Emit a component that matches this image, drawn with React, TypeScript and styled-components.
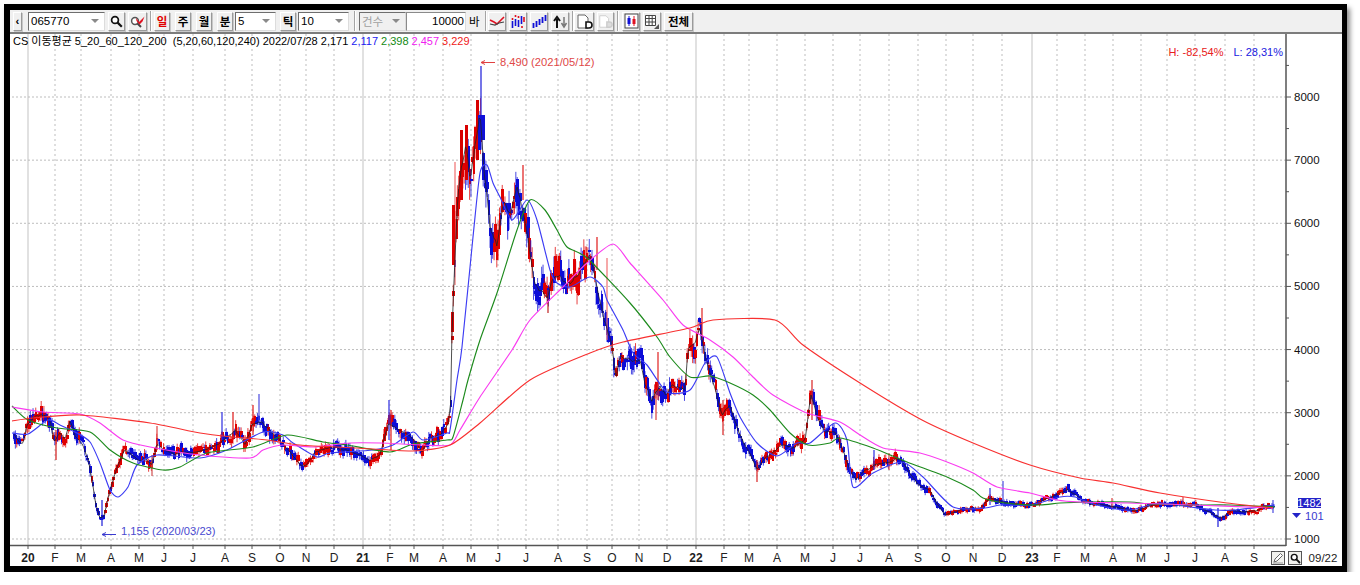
import React from "react";
import styled, { createGlobalStyle } from "styled-components";

const FONT = `"Liberation Sans", "Noto Sans CJK KR", sans-serif`;

const GlobalStyle = createGlobalStyle`
  html, body {
    margin: 0;
    background: #fff;
    font-family: ${FONT};
    overflow: hidden;
  }
`;

const Frame = styled.div`
  width: 1332px;
  height: 556px;
  margin: 4px 0 0 4px;
  border: 6px solid #000;
  border-right-width: 5px;
  box-shadow: 3px 4px 5px rgba(0, 0, 0, 0.45);
  background: #fff;
  display: flex;
  flex-direction: column;
`;

const Toolbar = styled.div`
  height: 22px;
  flex: none;
  display: flex;
  align-items: center;
  gap: 3px;
  padding-left: 3px;
  background: #f0f0f0;
  border-bottom: 2px solid #7c7c7c;
  box-sizing: content-box;
  font-size: 12px;
  color: #000;
`;

const ToolButton = styled.div<{ $w: number; $color?: string; $ml?: number }>`
  width: ${(p) => p.$w}px;
  height: 19px;
  flex: none;
  margin-left: ${(p) => p.$ml ?? 0}px;
  box-sizing: border-box;
  display: flex;
  align-items: center;
  justify-content: center;
  background: #f0f0f0;
  border: 1px solid;
  border-color: #fff #9a9a9a #9a9a9a #fff;
  box-shadow: 1px 1px 0 #c8c8c8;
  color: ${(p) => p.$color ?? "#000"};
  font-weight: 700;
  font-size: 11.5px;
`;

const Separator = styled.div<{ $ml?: number }>`
  width: 1px;
  height: 20px;
  flex: none;
  margin-left: ${(p) => p.$ml ?? 0}px;
  background: #a4a4a4;
  border-right: 1px solid #fff;
`;

const Combo = styled.div<{ $w: number; $disabled?: boolean; $ml?: number }>`
  width: ${(p) => p.$w}px;
  height: 19px;
  flex: none;
  margin-left: ${(p) => p.$ml ?? 0}px;
  box-sizing: border-box;
  display: flex;
  align-items: center;
  justify-content: space-between;
  padding: 0 5px 0 2px;
  background: ${(p) => (p.$disabled ? "#f0f0f0" : "#fff")};
  border: 1px solid;
  border-color: #6e6e6e #dcdcdc #dcdcdc #6e6e6e;
  color: ${(p) => (p.$disabled ? "#a0a0a0" : "#000")};
  font-size: 11.5px;
`;

const Arrow = styled.span`
  width: 0;
  height: 0;
  border-left: 4px solid transparent;
  border-right: 4px solid transparent;
  border-top: 4px solid #8a8a8a;
`;

const NumberInput = styled.div`
  width: 60px;
  height: 19px;
  flex: none;
  margin-left: -3px;
  box-sizing: border-box;
  text-align: right;
  line-height: 17px;
  padding-right: 1px;
  background: #fff;
  border: 1px solid;
  border-color: #8a8a8a #dcdcdc #dcdcdc #8a8a8a;
  font-size: 11.5px;
`;

const Unit = styled.span`
  width: 13px;
  flex: none;
  font-size: 11.5px;
`;

const ChartBody = styled.div`
  position: relative;
  flex: 1;
  min-height: 0;
`;

const ChartSvg = styled.svg`
  display: block;
  width: 100%;
  height: 100%;
  font-family: ${FONT};
`;

const Legend = styled.div`
  position: absolute;
  left: 3px;
  top: 0;
  display: flex;
  gap: 3px;
  font-size: 11px;
  line-height: 15px;
  white-space: pre;
`;

const LegendValue = styled.span<{ $color: string }>`
  color: ${(p) => p.$color};
`;

const RangeNote = styled.div`
  position: absolute;
  right: 59px;
  top: 11px;
  display: flex;
  gap: 10px;
  font-size: 11px;
  line-height: 14px;
`;

const CornerTools = styled.div`
  position: absolute;
  right: 1px;
  bottom: 1px;
  display: flex;
  align-items: center;
  gap: 3px;
`;

const CornerButton = styled.div`
  width: 14px;
  height: 14px;
  box-sizing: border-box;
  display: flex;
  align-items: center;
  justify-content: center;
  background: #f2f2ee;
  border: 1px solid #555;
`;

const DateLabel = styled.span`
  width: 36px;
  text-align: center;
  font-size: 11.5px;
  color: #222;
`;

const AxisText = styled.text<{ $bold?: boolean }>`
  font-size: 12px;
  font-weight: ${(p) => (p.$bold ? 700 : 400)};
  fill: #222;
  text-anchor: middle;
`;

const PriceText = styled.text`
  font-size: 11.5px;
  fill: #111;
`;

const NoteText = styled.text<{ $color: string }>`
  font-size: 11.2px;
  fill: ${(p) => p.$color};
`;

const CandleBody = styled.rect`
  shape-rendering: crispEdges;
`;

const AvgLine = styled.path<{ $color: string }>`
  fill: none;
  stroke: ${(p) => p.$color};
  stroke-width: 1.15;
`;

type Pt = [number, number];

// close path, read off the picture in page pixels
const PRICE: Pt[] = [
  [13, 432], [20, 443], [23, 445], [27, 425], [35, 416], [45, 415], [50, 420], [54, 443], [60, 432], [65, 438],
  [70, 420], [75, 436], [82, 445], [88, 458], [92, 480], [96, 505], [100, 518], [104, 516], [110, 490], [118, 465],
  [125, 450], [132, 455], [140, 462], [145, 458], [152, 465], [157, 445], [165, 450], [175, 455], [183, 452], [195, 453],
  [205, 450], [215, 445], [222, 442], [228, 435], [235, 430], [245, 445], [252, 425], [262, 422], [270, 430], [280, 440],
  [290, 452], [300, 465], [306, 466], [315, 452], [330, 447], [345, 450], [360, 455], [370, 460], [380, 455], [388, 425],
  [395, 428], [405, 432], [415, 440], [422, 452], [430, 438], [440, 435], [448, 425], [451, 400], [452, 330], [455, 260],
  [458, 190], [462, 165], [466, 140], [470, 180], [476, 140], [480, 110], [484, 170], [490, 225], [497, 245], [504, 200],
  [510, 215], [517, 185], [523, 210], [528, 240], [534, 280], [540, 290], [547, 300], [552, 280], [560, 278], [570, 285],
  [580, 270], [590, 255], [597, 285], [604, 320], [612, 345], [616, 380], [620, 355], [630, 360], [640, 362], [645, 385],
  [652, 400], [660, 385], [666, 395], [672, 385], [685, 390], [688, 350], [695, 340], [700, 330], [706, 360], [715, 390],
  [722, 415], [730, 405], [738, 430], [748, 450], [757, 470], [765, 458], [775, 450], [785, 445], [795, 448], [805, 440],
  [811, 395], [818, 420], [825, 432], [835, 432], [843, 450], [850, 470], [856, 480], [865, 470], [875, 465], [890, 462],
  [900, 458], [908, 470], [918, 485], [930, 490], [938, 505], [945, 515], [955, 512], [965, 508], [980, 508], [990, 498],
  [1005, 502], [1020, 505], [1035, 505], [1050, 497], [1068, 490], [1080, 498], [1090, 505], [1105, 505], [1120, 508], [1135, 511],
  [1150, 506], [1165, 503], [1180, 505], [1195, 505], [1205, 510], [1215, 515], [1222, 518], [1232, 510], [1245, 512], [1258, 510],
  [1268, 505], [1274, 508],
];

const MA20: Pt[] = [
  [12, 433], [28, 434], [48, 420], [60, 425], [77, 433], [90, 442], [100, 463], [110, 490], [118, 497], [128, 487],
  [137, 465], [157, 455], [200, 458], [227, 450], [263, 432], [283, 435], [293, 443], [317, 457], [330, 453], [373, 450],
  [393, 445], [413, 432], [423, 440], [447, 433], [450, 430], [457, 380], [462, 347], [473, 237], [480, 173], [487, 165],
  [493, 183], [500, 197], [512, 220], [527, 200], [537, 220], [550, 270], [557, 283], [570, 287], [590, 277], [603, 287],
  [607, 300], [623, 330], [633, 353], [647, 365], [667, 392], [690, 390], [705, 363], [717, 357], [730, 393], [740, 417],
  [757, 443], [777, 456], [797, 443], [810, 443], [835, 423], [847, 440], [853, 487], [873, 473], [902, 462], [923, 477],
  [953, 507], [985, 508], [1000, 505], [1030, 505], [1060, 497], [1075, 497], [1090, 503], [1110, 508], [1130, 510], [1160, 503],
  [1190, 507], [1215, 510], [1235, 510], [1275, 505],
];

const MA60: Pt[] = [
  [12, 406], [28, 420], [57, 428], [90, 432], [110, 450], [133, 463], [163, 470], [180, 467], [207, 453], [253, 447],
  [287, 435], [323, 442], [347, 445], [390, 452], [413, 444], [447, 440], [453, 437], [463, 400], [468, 380], [480, 340],
  [497, 293], [517, 230], [530, 200], [545, 210], [557, 230], [567, 247], [587, 258], [630, 303], [657, 337], [670, 357],
  [690, 377], [710, 376], [730, 383], [753, 395], [770, 410], [790, 433], [808, 445], [830, 443], [840, 438], [873, 448],
  [907, 462], [947, 477], [973, 490], [983, 498], [1005, 503], [1040, 505], [1060, 503], [1090, 502], [1130, 502], [1150, 504],
  [1190, 505], [1230, 505], [1275, 507],
];

const MA120: Pt[] = [
  [12, 407], [43, 412], [80, 414], [100, 423], [123, 440], [150, 447], [200, 455], [250, 458], [263, 450], [283, 445],
  [313, 447], [350, 443], [380, 443], [423, 445], [450, 445], [460, 430], [480, 397], [512, 350], [530, 320], [563, 287],
  [587, 263], [613, 244], [630, 263], [663, 300], [683, 325], [710, 340], [733, 357], [753, 377], [773, 395], [807, 413],
  [840, 422], [860, 435], [883, 448], [920, 453], [947, 462], [973, 473], [997, 487], [1030, 493], [1057, 500], [1080, 502],
  [1127, 503], [1193, 505], [1273, 508],
];

const MA240: Pt[] = [
  [12, 421], [33, 418], [80, 415], [150, 423], [200, 433], [233, 437], [267, 440], [300, 445], [357, 448], [413, 451],
  [450, 445], [480, 423], [530, 380], [590, 353], [623, 342], [690, 328], [713, 320], [775, 320], [803, 345], [860, 383],
  [922, 420], [973, 443], [1030, 465], [1080, 478], [1113, 483], [1160, 493], [1227, 503], [1273, 508],
];

// wicks that stand out from the noise: x, top, bottom, colour
const WICKS: [number, number, number, string][] = [
  [481, 66, 130, "#1a1ad8"], [259, 394, 425, "#4a4ae0"], [222, 412, 440, "#2a2ae0"], [233, 412, 440, "#e01818"],
  [253, 405, 435, "#e01818"], [157, 426, 450, "#e04040"], [56, 430, 460, "#d01818"], [152, 455, 476, "#d05050"],
  [389, 400, 440, "#2a2ae0"], [391, 410, 450, "#e01818"], [702, 308, 340, "#e02020"], [658, 352, 400, "#e02020"],
  [656, 390, 420, "#d84040"], [723, 400, 435, "#d82020"], [757, 460, 482, "#d82020"], [812, 380, 420, "#d82020"],
  [455, 162, 285, "#f07070"], [523, 165, 200, "#e01818"], [607, 258, 340, "#f07070"], [597, 237, 270, "#e01818"],
  [548, 290, 313, "#c02020"], [874, 450, 470, "#2a2ae0"], [889, 453, 470, "#e04040"], [990, 488, 505, "#2a2ae0"],
  [1003, 481, 505, "#4a4ae0"], [1112, 498, 508, "#e04040"], [1218, 508, 527, "#1a1ad8"], [1273, 500, 513, "#4a4ae0"],
  [1183, 497, 506, "#e04040"], [102, 500, 526, "#1a1ad8"],
];

// bodies that have to be where they are: x, top, bottom, colour
const BODIES: [number, number, number, string][] = [
  [452, 312, 332, "#d80000"], [453, 205, 265, "#e00000"], [477, 100, 160, "#d80000"], [461, 130, 200, "#d80000"],
  [466, 125, 180, "#d80000"], [481, 115, 137, "#1010d8"], [479, 115, 150, "#1010d8"], [483, 115, 140, "#1010d8"],
];

const yearTicks = [
  { x: 28, label: "20", year: true }, { x: 55, label: "F" }, { x: 81, label: "M" }, { x: 111, label: "A" }, { x: 139, label: "M" },
  { x: 164, label: "J" }, { x: 193, label: "J" }, { x: 225, label: "A" }, { x: 252, label: "S" }, { x: 280, label: "O" },
  { x: 306, label: "N" }, { x: 334, label: "D" }, { x: 363, label: "21", year: true }, { x: 390, label: "F" }, { x: 414, label: "M" },
  { x: 443, label: "A" }, { x: 471, label: "M" }, { x: 498, label: "J" }, { x: 526, label: "J" }, { x: 558, label: "A" },
  { x: 587, label: "S" }, { x: 612, label: "O" }, { x: 639, label: "N" }, { x: 667, label: "D" }, { x: 696, label: "22", year: true },
  { x: 724, label: "F" }, { x: 749, label: "M" }, { x: 777, label: "A" }, { x: 805, label: "M" }, { x: 833, label: "J" },
  { x: 860, label: "J" }, { x: 889, label: "A" }, { x: 918, label: "S" }, { x: 946, label: "O" }, { x: 973, label: "N" },
  { x: 1002, label: "D" }, { x: 1032, label: "23", year: true }, { x: 1057, label: "F" }, { x: 1085, label: "M" }, { x: 1113, label: "A" },
  { x: 1141, label: "M" }, { x: 1167, label: "J" }, { x: 1195, label: "J" }, { x: 1225, label: "A" }, { x: 1254, label: "S" },
];

const priceLevels = [8000, 7000, 6000, 5000, 4000, 3000, 2000, 1000];
const priceY = (p: number) => 97 + ((8000 - p) * 442) / 7000;

const toPoints = (pts: Pt[]) => pts.map(([x, y]) => `${x},${y}`).join(" ");

// catmull-rom through the read-off points, the averages are smooth curves
const toCurve = (pts: Pt[]) => {
  let d = `M${pts[0][0]} ${pts[0][1]}`;
  for (let i = 0; i < pts.length - 1; i++) {
    const p0 = pts[i - 1] ?? pts[i];
    const p1 = pts[i];
    const p2 = pts[i + 1];
    const p3 = pts[i + 2] ?? p2;
    const k = 0.12;
    d += ` C${p1[0] + (p2[0] - p0[0]) * k} ${p1[1] + (p2[1] - p0[1]) * k} ${p2[0] - (p3[0] - p1[0]) * k} ${p2[1] - (p3[1] - p1[1]) * k} ${p2[0]} ${p2[1]}`;
  }
  return d;
};

const pathY = (pts: Pt[], x: number) => {
  for (let i = 1; i < pts.length; i++) {
    if (x <= pts[i][0]) {
      const [x0, y0] = pts[i - 1];
      const [x1, y1] = pts[i];
      return y0 + ((y1 - y0) * (x - x0)) / (x1 - x0 || 1);
    }
  }
  return pts[pts.length - 1][1];
};

let seed = 20220728;
const rnd = () => {
  seed = (seed * 1664525 + 1013904223) % 4294967296;
  return seed / 4294967296;
};

type Candle = { x: number; top: number; bottom: number; hi: number; lo: number; color: string };

const makeCandles = () => {
  const out: Candle[] = [];
  const line: Pt[] = [];
  let walk = 0;
  for (let x = 14; x <= 1274; x += 1.36) {
    const base = pathY(PRICE, x);
    const slope = pathY(PRICE, x + 3) - pathY(PRICE, x - 3);
    // the stock barely moves once it is cheap, so the candles shrink with the price
    const amp = Math.min(34, 1.6 + Math.max(0, 530 - base) * 0.08);
    walk = walk * 0.6 + (rnd() - 0.5) * amp;
    const mid = base + walk;
    const size = rnd() * amp * 0.9 + 1.5;
    const top = mid - size / 2;
    const bottom = mid + size / 2;
    const falling = rnd() < (slope > 0 ? 0.82 : slope < 0 ? 0.25 : 0.5);
    out.push({
      x,
      top,
      bottom,
      hi: top - rnd() * amp * 0.55,
      lo: bottom + rnd() * amp * 0.55,
      color: falling ? "#0c0cd8" : "#e00000",
    });
    line.push([Math.round(x * 10) / 10, Math.round((base + walk * 0.2) * 10) / 10]);
  }
  return { candles: out, line };
};

const { candles, line: ma5 } = makeCandles();

const SearchIcon = ({ size = 13 }: { size?: number }) => (
  <svg width={size} height={size} viewBox="0 0 13 13">
    <circle cx="5" cy="5" r="3.4" fill="#fff" stroke="#111" strokeWidth="1.7" />
    <path d="M7.6 7.6 L11.8 11.8" stroke="#111" strokeWidth="2.2" />
  </svg>
);

const MarkSearchIcon = () => (
  <svg width="16" height="13" viewBox="0 0 16 13">
    <circle cx="5" cy="6" r="3.4" fill="#fff" stroke="#555" strokeWidth="1.5" />
    <path d="M7.5 8.5 L11 12" stroke="#444" strokeWidth="2" />
    <path d="M6 3 L9 7 L14.5 1.5 L12.5 6.5 L9.5 9.5 L6.5 6 Z" fill="#e01020" />
  </svg>
);

const LineCheckIcon = () => (
  <svg width="16" height="13" viewBox="0 0 16 13">
    <path d="M1 5 L5 7 L8 9 L15 2" fill="none" stroke="#e01020" strokeWidth="1.6" />
    <path d="M1 9 L6 10 L10 8 L15 7" fill="none" stroke="#444" strokeWidth="1.2" />
  </svg>
);

const DotBarsIcon = () => (
  <svg width="16" height="15" viewBox="0 0 16 15">
    <path d="M2.5 7 V14 M5.5 5 V12 M8.5 6 V13 M11.5 2 V10" stroke="#1010d8" strokeWidth="1.6" />
    <path d="M2.5 4 V6 M5.5 1 V3 M8.5 2 V4 M14 3 V8 M12 12 V14" stroke="#e01020" strokeWidth="1.6" />
  </svg>
);

const BarsIcon = () => (
  <svg width="16" height="15" viewBox="0 0 16 15">
    <path d="M2.5 9 V14 M5.5 7 V13 M8.5 5 V11 M11.5 3 V9 M14.5 1 V7" stroke="#1010d8" strokeWidth="1.8" />
  </svg>
);

const UpDownIcon = () => (
  <svg width="16" height="15" viewBox="0 0 16 15">
    <path d="M5 14 V5 M2 7 L5 3 L8 7" fill="none" stroke="#111" strokeWidth="2" />
    <path d="M12 3 V11 M9.5 9 L12 13 L14.5 9" fill="none" stroke="#777" strokeWidth="1.5" />
  </svg>
);

const DocIcon = ({ muted }: { muted?: boolean }) => (
  <svg width="17" height="15" viewBox="0 0 17 15">
    <path d="M2 1 H9 L12 4 V14 H2 Z" fill="#fff" stroke={muted ? "#ccc" : "#666"} />
    <path
      d="M10 8 H13 Q16 8 16 11 Q16 14 13 14 H10 Z"
      fill={muted ? "#ddd" : "#fff"}
      stroke={muted ? "#ccc" : "#111"}
      strokeWidth="1.6"
    />
  </svg>
);

const CandleDocIcon = () => (
  <svg width="15" height="16" viewBox="0 0 15 16">
    <rect x="1" y="1" width="13" height="14" fill="#fff" stroke="#444" />
    <path d="M5 3 V13" stroke="#1010d8" />
    <rect x="3.5" y="5" width="3" height="6" fill="#1010d8" />
    <path d="M10 3 V13" stroke="#e01020" />
    <rect x="8.5" y="6" width="3" height="5" fill="#e01020" />
  </svg>
);

const TableIcon = () => (
  <svg width="16" height="15" viewBox="0 0 16 15">
    <path
      d="M1.5 1.5 H11.5 V11.5 H1.5 Z M1.5 4.5 H11.5 M1.5 8 H11.5 M5 1.5 V11.5 M8.2 1.5 V11.5"
      fill="#fff"
      stroke="#444"
    />
    <path d="M15 10 V15 H10 Z" fill="#555" />
  </svg>
);

const PencilIcon = () => (
  <svg width="12" height="12" viewBox="0 0 12 12">
    <path d="M2 10 L3 7 L8.5 1.5 L10.5 3.5 L5 9 Z" fill="#fff" stroke="#666" />
    <path d="M1 11 H11" stroke="#999" />
  </svg>
);

export default function App() {
  return (
    <>
      <GlobalStyle />
      <Frame>
        <Toolbar>
          <ToolButton $w={9}>‹</ToolButton>
          <Combo $w={77} $ml={3}>
            065770
            <Arrow />
          </Combo>
          <ToolButton $w={17}>
            <SearchIcon />
          </ToolButton>
          <ToolButton $w={19}>
            <MarkSearchIcon />
          </ToolButton>
          <Separator />
          <ToolButton $w={16} $color="#e00000" $ml={-1}>
            일
          </ToolButton>
          <ToolButton $w={16} $ml={2}>
            주
          </ToolButton>
          <ToolButton $w={16} $ml={2}>
            월
          </ToolButton>
          <ToolButton $w={16} $ml={2}>
            분
          </ToolButton>
          <Combo $w={41} $ml={-1}>
            5
            <Arrow />
          </Combo>
          <ToolButton $w={16} $ml={1}>
            틱
          </ToolButton>
          <Combo $w={51} $ml={-1}>
            10
            <Arrow />
          </Combo>
          <Separator $ml={2} />
          <Combo $w={47} $disabled>
            건수
            <Arrow />
          </Combo>
          <NumberInput>10000</NumberInput>
          <Unit>바</Unit>
          <Separator />
          <ToolButton $w={18} $ml={-2}>
            <LineCheckIcon />
          </ToolButton>
          <ToolButton $w={18}>
            <DotBarsIcon />
          </ToolButton>
          <ToolButton $w={18}>
            <BarsIcon />
          </ToolButton>
          <ToolButton $w={18}>
            <UpDownIcon />
          </ToolButton>
          <Separator />
          <ToolButton $w={20} $ml={-3}>
            <DocIcon />
          </ToolButton>
          <ToolButton $w={17}>
            <DocIcon muted />
          </ToolButton>
          <Separator />
          <ToolButton $w={18}>
            <CandleDocIcon />
          </ToolButton>
          <ToolButton $w={18}>
            <TableIcon />
          </ToolButton>
          <ToolButton $w={29}>전체</ToolButton>
        </Toolbar>
        <ChartBody>
          <ChartSvg viewBox="10 34 1332 532" preserveAspectRatio="none">
            {/* grid */}
            {yearTicks.map((t) => (
              <line
                key={t.x}
                x1={t.x}
                x2={t.x}
                y1={34}
                y2={545}
                stroke={t.year ? "#d4d4d4" : "#bdbdbd"}
                strokeWidth={t.year ? 1.4 : 1}
                strokeDasharray={t.year ? undefined : "2 3"}
              />
            ))}
            {priceLevels.map((p) => (
              <line
                key={p}
                x1={12}
                x2={1286}
                y1={priceY(p)}
                y2={priceY(p)}
                stroke="#bdbdbd"
                strokeDasharray="2 2"
              />
            ))}

            {/* candles */}
            {candles.map((c, i) => (
              <g key={i}>
                <line x1={c.x} x2={c.x} y1={c.hi} y2={c.lo} stroke={c.color} strokeOpacity={0.75} />
                <CandleBody x={c.x - 1} y={c.top} width={2.6} height={c.bottom - c.top} fill={c.color} />
              </g>
            ))}
            {WICKS.map(([x, y1, y2, color], i) => (
              <line key={i} x1={x} x2={x} y1={y1} y2={y2} stroke={color} strokeWidth={1.2} />
            ))}
            {BODIES.map(([x, y1, y2, color], i) => (
              <CandleBody key={i} x={x - 1.5} y={y1} width={3} height={y2 - y1} fill={color} />
            ))}

            {/* moving averages */}
            <polyline points={toPoints(ma5)} fill="none" stroke="#222" strokeWidth={0.8} />
            <AvgLine d={toCurve(MA20)} $color="#3c3cf4" />
            <AvgLine d={toCurve(MA60)} $color="#1c8a1c" />
            <AvgLine d={toCurve(MA120)} $color="#fa3cf0" />
            <AvgLine d={toCurve(MA240)} $color="#f83030" />

            {/* high and low notes */}
            <path d="M481 62.5 H495 M481 62.5 L485 60.5 M481 62.5 L485 64.5" stroke="#e04040" fill="none" />
            <NoteText x={500} y={66} $color="#e04848">
              8,490 (2021/05/12)
            </NoteText>
            <path d="M102 534.5 H116 M102 534.5 L106 532.5 M102 534.5 L106 536.5" stroke="#3a3ad0" fill="none" />
            <NoteText x={121} y={535} $color="#4a4ad0">
              1,155 (2020/03/23)
            </NoteText>

            {/* axes */}
            <line x1={1286} x2={1286} y1={34} y2={546} stroke="#555" strokeWidth={1.5} />
            <line x1={10} x2={1286} y1={545.5} y2={545.5} stroke="#555" strokeWidth={1.5} />
            {yearTicks.map((t) => (
              <g key={t.x}>
                <line x1={t.x} x2={t.x} y1={545} y2={549} stroke="#555" />
                <AxisText x={t.x} y={562} $bold={t.year}>
                  {t.label}
                </AxisText>
              </g>
            ))}
            {priceLevels.map((p) => (
              <g key={p}>
                <line x1={1286} x2={1291} y1={priceY(p)} y2={priceY(p)} stroke="#555" />
                <PriceText x={1294} y={priceY(p) + 4}>
                  {p}
                </PriceText>
              </g>
            ))}
            {[8500, 7500, 6500, 5500, 4500, 3500, 2500, 1500].map((p) => (
              <line key={p} x1={1286} x2={1289} y1={priceY(p)} y2={priceY(p)} stroke="#555" />
            ))}

            {/* last price */}
            <rect x={1298} y={498} width={23} height={10} fill="#2323c8" />
            <text x={1309.5} y={507} textAnchor="middle" fontSize={11} fill="#fff">
              1482
            </text>
            <path d="M1292 513 H1301 L1296.5 518 Z" fill="#2323c8" />
            <NoteText x={1305} y={520} $color="#3a3ad0">
              101
            </NoteText>
          </ChartSvg>

          <Legend>
            <span>{"CS 이동평균 5_20_60_120_200  (5,20,60,120,240) 2022/07/28 2,171"}</span>
            <LegendValue $color="#2020f0">2,117</LegendValue>
            <LegendValue $color="#128a12">2,398</LegendValue>
            <LegendValue $color="#f020f0">2,457</LegendValue>
            <LegendValue $color="#f02020">3,229</LegendValue>
          </Legend>
          <RangeNote>
            <LegendValue $color="#e82020">H: -82,54%</LegendValue>
            <LegendValue $color="#2020e0">L: 28,31%</LegendValue>
          </RangeNote>
          <CornerTools>
            <CornerButton>
              <PencilIcon />
            </CornerButton>
            <CornerButton>
              <SearchIcon size={11} />
            </CornerButton>
            <DateLabel>09/22</DateLabel>
          </CornerTools>
        </ChartBody>
      </Frame>
    </>
  );
}
